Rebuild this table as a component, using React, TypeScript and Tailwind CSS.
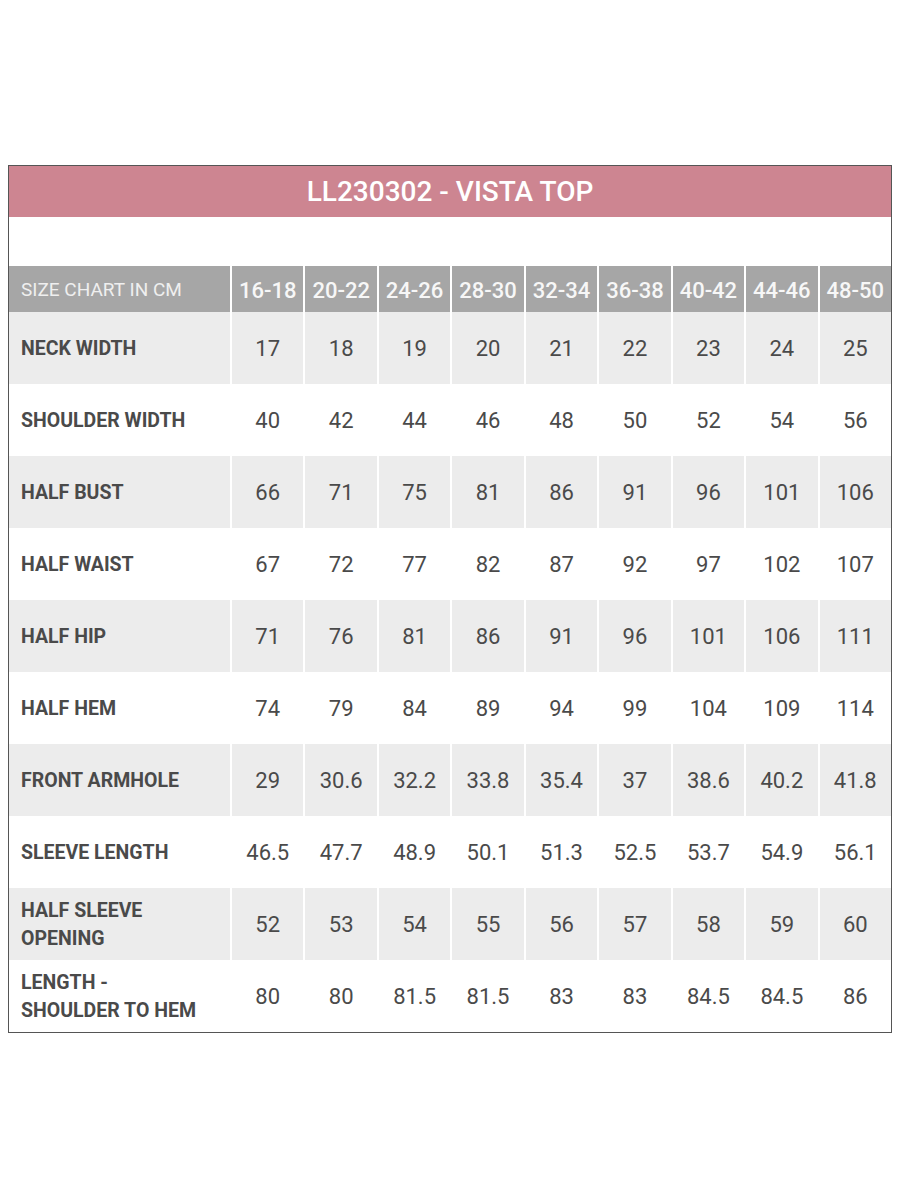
const sizes = ["16-18", "20-22", "24-26", "28-30", "32-34", "36-38", "40-42", "44-46", "48-50"]

const rows: { label: string[]; values: string[] }[] = [
  { label: ["NECK WIDTH"], values: ["17", "18", "19", "20", "21", "22", "23", "24", "25"] },
  { label: ["SHOULDER WIDTH"], values: ["40", "42", "44", "46", "48", "50", "52", "54", "56"] },
  { label: ["HALF BUST"], values: ["66", "71", "75", "81", "86", "91", "96", "101", "106"] },
  { label: ["HALF WAIST"], values: ["67", "72", "77", "82", "87", "92", "97", "102", "107"] },
  { label: ["HALF HIP"], values: ["71", "76", "81", "86", "91", "96", "101", "106", "111"] },
  { label: ["HALF HEM"], values: ["74", "79", "84", "89", "94", "99", "104", "109", "114"] },
  { label: ["FRONT ARMHOLE"], values: ["29", "30.6", "32.2", "33.8", "35.4", "37", "38.6", "40.2", "41.8"] },
  { label: ["SLEEVE LENGTH"], values: ["46.5", "47.7", "48.9", "50.1", "51.3", "52.5", "53.7", "54.9", "56.1"] },
  { label: ["HALF SLEEVE", "OPENING"], values: ["52", "53", "54", "55", "56", "57", "58", "59", "60"] },
  { label: ["LENGTH -", "SHOULDER TO HEM"], values: ["80", "80", "81.5", "81.5", "83", "83", "84.5", "84.5", "86"] },
]

export default function App() {
  return (
    <div className="min-h-[1200px] bg-white pt-[165px] font-['Roboto',sans-serif]">
      <div className="ml-[8px] w-[884px] border border-[#555555]">
        <div className="flex h-[51px] items-center justify-center bg-[#cd8591] pt-[1px] text-[28px] font-medium text-white">
          LL230302 - VISTA TOP
        </div>
        <div className="h-[49px]" />
        <div className="grid h-[46px] grid-cols-[221px_repeat(9,1fr)] bg-[#a6a6a6]">
          <div className="flex items-center pl-[12px] pt-[2px] text-[19px] text-[#efefef]">SIZE CHART IN CM</div>
          {sizes.map((s) => (
            <div key={s} className="flex items-center justify-center border-l-2 border-white pt-[2px] text-[22px] font-medium text-[#f7f7f7]">
              {s}
            </div>
          ))}
        </div>
        {rows.map((row, i) => (
          <div
            key={row.label.join(" ")}
            className={`grid h-[72px] grid-cols-[221px_repeat(9,1fr)] ${i % 2 === 0 ? "bg-[#ececec]" : "bg-white"}`}
          >
            <div className="flex flex-col justify-center pl-[12px] pt-[1px] text-[19.5px] font-bold leading-[28px] text-[#4a4a4a]">
              {row.label.map((l) => (
                <span key={l}>{l}</span>
              ))}
            </div>
            {row.values.map((v, j) => (
              <div key={j} className="flex items-center justify-center border-l-2 border-white text-[22px] text-[#4a4a4a]">
                {v}
              </div>
            ))}
          </div>
        ))}
      </div>
    </div>
  )
}
